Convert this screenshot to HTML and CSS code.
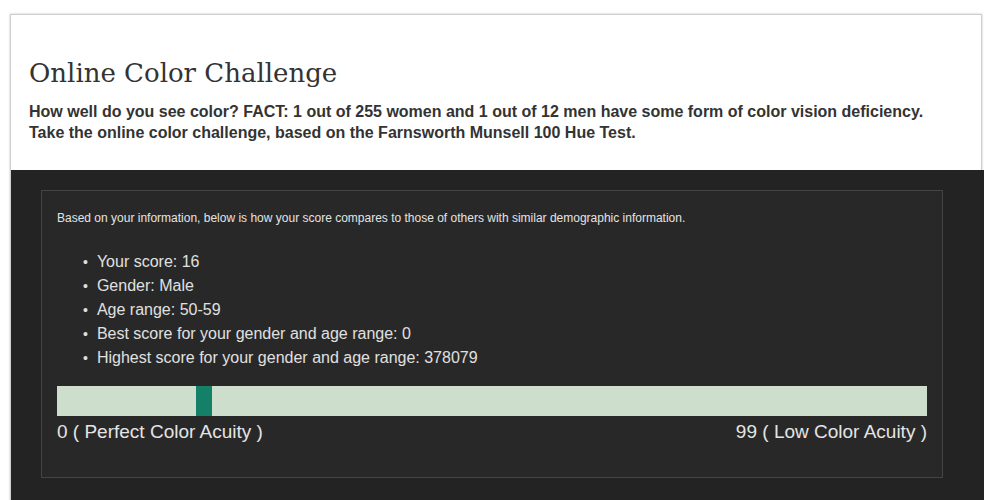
FILE: index.html
```html
<!DOCTYPE html>
<html lang="en">
<head>
  <meta charset="UTF-8" />
  <title>Online Color Challenge</title>
  <link rel="stylesheet" href="styles.css">
</head>
<body>

  <div class="card">
    <div class="card-head">
      <h1>Online Color Challenge</h1>
      <p class="intro">
        How well do you see color? FACT: 1 out of 255 women and 1 out of 12 men have some form of color vision deficiency.<br />
        Take the online color challenge, based on the Farnsworth Munsell 100 Hue Test.
      </p>
    </div>

    <div class="dark-section">
      <div class="result-box">
        <p class="note">Based on your information, below is how your score compares to those of others with similar demographic information.</p>
        <ul class="stats">
          <li>Your score: 16</li>
          <li>Gender: Male</li>
          <li>Age range: 50-59</li>
          <li>Best score for your gender and age range: 0</li>
          <li>Highest score for your gender and age range: 378079</li>
        </ul>
        <div class="scale">
          <div class="marker" style="margin-left: 139px"></div>
        </div>
        <div class="scale-labels">
          <span>0 ( Perfect Color Acuity )</span>
          <span>99 ( Low Color Acuity )</span>
        </div>
      </div>
    </div>
  </div>

</body>
</html>
```

FILE: styles.css
```css
html, body {
  margin: 0;
  padding: 0;
  font-family: "Liberation Sans", Arial, sans-serif;
  background-color: #ffffff;
}

body {
  padding: 14px 0 0 10px;
}

.card {
  width: 970px;
  border: 1px solid #cfcfcf;
  box-shadow: 0 0 2px rgba(0, 0, 0, 0.25);
  background-color: #ffffff;
}

.card-head {
  padding: 41px 18px 0 18px;
  height: 114px;
}

h1 {
  margin: 0;
  font-family: "DejaVu Serif", Georgia, serif;
  font-weight: normal;
  font-size: 26px;
  line-height: 34px;
  color: #333333;
}

.intro {
  margin: 11px 0 0 0;
  font-size: 16px;
  font-weight: bold;
  line-height: 21px;
  color: #333333;
}

.dark-section {
  background-color: #232323;
  margin-right: -3px;
  padding: 20px 41px 22px 30px;
  height: 308px;
}

.result-box {
  background-color: #282828;
  border: 1px solid #444444;
  padding: 19px 15px 29px 15px;
}

.note {
  margin: 0;
  font-size: 12px;
  line-height: 16px;
  color: #e4e4e4;
}

.stats {
  margin: 24px 0 16px 0;
  padding: 0 0 0 40px;
  list-style: none;
  font-size: 16px;
  line-height: 24px;
  color: #e0e0e0;
}

.stats li::before {
  content: "\2022";
  margin-left: -14px;
  padding-right: 9px;
  font-size: 14px;
  line-height: 1;
}

.scale {
  height: 30px;
  background-color: #cddecc;
  display: flex;
}

.marker {
  width: 16px;
  background-color: #158068;
}

.scale-labels {
  display: flex;
  justify-content: space-between;
  font-size: 19px;
  line-height: 32px;
  color: #e4e4e4;
}
```
